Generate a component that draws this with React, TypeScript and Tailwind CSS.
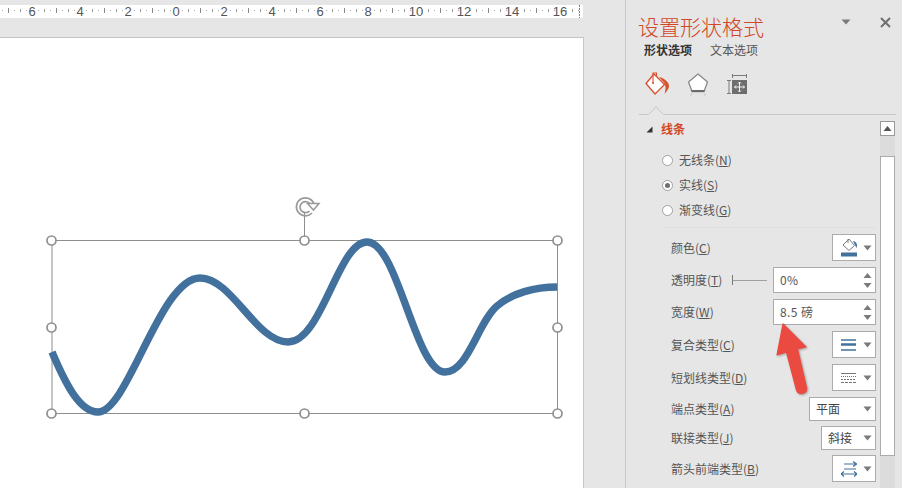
import React from "react";

const FONT = "font-['Noto_Sans_CJK_SC','Noto_Sans',sans-serif]";

function Caret() {
  return (
    <svg width="9" height="6" viewBox="0 0 9 6" className="shrink-0">
      <path d="M0.5 0.5H8.5L4.5 5.5Z" fill="#7a7a7a" />
    </svg>
  );
}

function Ruler() {
  const labels = ["6", "4", "2", "0", "2", "4", "6", "8", "10", "12", "14", "16"];
  const ticks: React.ReactNode[] = [];
  for (let x = 2; x < 579; x += 6) {
    const k = ((x - 32) % 48 + 48) % 48;
    if (k === 0) continue;
    if (k === 24) ticks.push(<rect key={x} x={x} y={8} width={1} height={5} fill="#8a8a8a" />);
    else if (k % 12 === 0) ticks.push(<rect key={x} x={x} y={9} width={1} height={3} fill="#9a9a9a" />);
    else ticks.push(<rect key={x} x={x} y={10} width={1} height={1} fill="#a8a8a8" />);
  }
  return (
    <div className="relative mt-[5px] h-[13px] w-[583px] bg-white overflow-hidden shrink-0">
      <svg width="583" height="13" viewBox="0 5 583 13" className="absolute left-0 top-0">
        {ticks}
        <path d="M579.5 5V18" stroke="#c8643c" strokeWidth="1" strokeDasharray="2 1" />
      </svg>
      <div className="relative flex pl-2">
        {labels.map((l, i) => (
          <div key={i} className="w-12 h-[13px] shrink-0 flex items-center justify-center text-[13px] leading-[13px] text-[#555555] font-['Liberation_Sans',sans-serif]">
            {l}
          </div>
        ))}
      </div>
    </div>
  );
}

function Handle({ x, y }: { x: number; y: number }) {
  return <circle cx={x} cy={y} r={4.5} fill="#ffffff" stroke="#8e8e8e" strokeWidth={1.7} />;
}

function Shape() {
  return (
    <svg width="584" height="450" viewBox="0 38 584 450" className="absolute left-0 top-0">
      <path d="M304.5 213V240" stroke="#8e8e8e" />
      <rect x="52" y="240.5" width="505.5" height="173" fill="none" stroke="#8e8e8e" strokeWidth="1" />
      <path
        d="M52 352 C66 385 80 412 98 412 C128 412 160 278 200 278 C232 278 256 342 288 342 C322 342 338 242 367 242 C398 242 415 372 445 372 C468 372 478 322 497 306 C512 293 535 287 557 287"
        fill="none"
        stroke="#41719c"
        strokeWidth="7.4"
      />
      <Handle x={51.5} y={240.5} />
      <Handle x={304.5} y={240.5} />
      <Handle x={557.5} y={240.5} />
      <Handle x={51.5} y={327.5} />
      <Handle x={557.5} y={327.5} />
      <Handle x={51.5} y={413.5} />
      <Handle x={304.5} y={413.5} />
      <Handle x={557.5} y={413.5} />
      <path d="M312 213 A9 9 0 1 1 314 204" fill="none" stroke="#9a9a9a" strokeWidth="1.7" />
      <path d="M309.5 211 A5.5 5.5 0 1 1 310 204" fill="none" stroke="#9a9a9a" strokeWidth="1.7" />
      <path d="M307.5 203.5H319L313.5 210Z" fill="#ffffff" stroke="#9a9a9a" strokeWidth="1.5" />
    </svg>
  );
}

function Label({ text, k }: { text: string; k: string }) {
  return (
    <span className="text-xs text-[#555555] whitespace-nowrap">
      {text}(<span className="underline">{k}</span>)
    </span>
  );
}

function Radio({ text, k, checked, className }: { text: string; k: string; checked?: boolean; className: string }) {
  return (
    <div className={`flex items-center h-4 ml-[36px] gap-[6px] ${className}`}>
      <div className="w-[11px] h-[11px] rounded-full border border-[#a0a0a0] bg-white flex items-center justify-center">
        {checked && <div className="w-[5px] h-[5px] rounded-full bg-[#6f6f6f]" />}
      </div>
      <Label text={text} k={k} />
    </div>
  );
}

function Row({ text, k, className, children }: { text: string; k: string; className: string; children: React.ReactNode }) {
  return (
    <div className={`flex items-center justify-between ml-[45px] w-[205px] ${className}`}>
      <Label text={text} k={k} />
      {children}
    </div>
  );
}

function IconBox({ children }: { children: React.ReactNode }) {
  return (
    <div className="w-11 h-[27px] border border-[#ababab] bg-white flex items-center pl-2 pr-[3px] justify-between">
      {children}
      <Caret />
    </div>
  );
}

function Spin({ value }: { value: string }) {
  return (
    <div className="w-[103px] h-[26px] border border-[#ababab] bg-white flex items-center justify-between pl-1.5 pr-[3px]">
      <span className="text-xs text-[#555555] tracking-[0.4px] whitespace-pre">{value}</span>
      <div className="flex flex-col gap-[5px] mr-0">
        <svg width="9" height="5" viewBox="0 0 9 5"><path d="M0.5 5L4.5 0L8.5 5Z" fill="#7a7a7a" /></svg>
        <svg width="9" height="5" viewBox="0 0 9 5"><path d="M0.5 0H8.5L4.5 5Z" fill="#7a7a7a" /></svg>
      </div>
    </div>
  );
}

function Drop({ value, w }: { value: string; w: string }) {
  return (
    <div className={`${w} h-6 border border-[#ababab] bg-white flex items-center justify-between pl-1.5 pr-[3px]`}>
      <span className="text-xs text-[#444444]">{value}</span>
      <Caret />
    </div>
  );
}

function PanelIcons() {
  return (
    <div className="flex items-start h-[24px] ml-[6px] mt-[13px]">
      <svg width="25" height="24" viewBox="645 73 25 24" className="shrink-0">
        <path d="M654 75L664.5 85.5L655 95L646 84.5Z" fill="#ffffff" stroke="#d9502e" strokeWidth="1.3" strokeLinejoin="round" />
        <path d="M653 84V74H656.5V78" fill="none" stroke="#d9502e" strokeWidth="1.1" />
        <circle cx="653" cy="84" r="1" fill="#d9502e" />
        <path d="M659 78C664 79 669 83 669 87C669 90 666 93 664.5 95C665.5 91 666.5 88 664 83.5Z" fill="#d9502e" />
      </svg>
      <svg width="22" height="25" viewBox="686 72 22 25" className="shrink-0 ml-[17px]">
        <path d="M697 74L706.5 82L703 91.5H691L687.5 82Z" fill="#ffffff" stroke="#8a8a8a" strokeWidth="1.3" strokeLinejoin="round" />
        <path d="M690.5 91H703.5" stroke="#6b6b6b" strokeWidth="2" />
        <path d="M691 93L689.5 96M703 93L704.5 96" stroke="#cfcfcf" strokeWidth="1.2" />
      </svg>
      <svg width="22" height="24" viewBox="725 73 22 24" className="shrink-0 ml-[17px]">
        <path d="M731.5 75V79M745.5 75V79M731.5 76.5H745.5" fill="none" stroke="#7a7a7a" strokeWidth="1" />
        <path d="M726 81.5H730M726 94.5H730M728 81.5V94.5" fill="none" stroke="#7a7a7a" strokeWidth="1" />
        <rect x="731" y="81" width="15" height="14" fill="#6d6d6d" />
        <path d="M738.5 83V93M733.5 88H743.5M737 84.5L738.5 83L740 84.5M737 91.5L738.5 93L740 91.5M735 86.5L733.5 88L735 89.5M742 86.5L743.5 88L742 89.5" fill="none" stroke="#ffffff" strokeWidth="0.9" />
      </svg>
    </div>
  );
}

function Panel() {
  return (
    <div className={`relative w-[276px] h-[488px] flex flex-col shrink-0 ${FONT}`}>
      <div className="h-[115px] shrink-0 ml-[13px] mr-[6px] border-b border-[#c6c6c6] relative">
        <div className="flex items-center justify-between pt-[10px] h-[41px]">
          <span className="text-[21px] leading-7 font-light text-[#d24726] whitespace-nowrap -ml-px">设置形状格式</span>
          <div className="flex items-center gap-[29px] pr-[5px] pb-[7px]">
            <svg width="10" height="6" viewBox="0 0 10 6"><path d="M0.5 0.5H9.5L5 5.5Z" fill="#7a7a7a" /></svg>
            <svg width="11" height="11" viewBox="0 0 11 11"><path d="M1 1L10 10M10 1L1 10" stroke="#6f6f6f" strokeWidth="2" /></svg>
          </div>
        </div>
        <div className="flex gap-[18px] ml-[5px] text-xs h-[18px] items-center">
          <span className="font-bold text-[#333333]">形状选项</span>
          <span className="text-[#555555]">文本选项</span>
        </div>
        <PanelIcons />
        <svg width="18" height="9" viewBox="0 0 18 9" className="absolute left-2 bottom-[-1px]">
          <path d="M0 8.5H1.5L9 0.8L16.5 8.5H18V9H0Z" fill="#e6e6e6" />
          <path d="M0 8.5H1.5L9 0.8L16.5 8.5H18" fill="none" stroke="#c6c6c6" />
        </svg>
      </div>
      <div className="flex flex-1 min-h-0">
        <div className="flex-1 min-w-0 flex flex-col">
          <div className="flex items-center h-4 mt-[6px] ml-[20px] gap-[8px]">
            <svg width="7" height="7" viewBox="0 0 7 7"><path d="M6.5 0.5V6.5H0.5Z" fill="#333333" /></svg>
            <span className="text-xs font-bold text-[#d24726]">线条</span>
          </div>
          <Radio text="无线条" k="N" className="mt-[15px]" />
          <Radio text="实线" k="S" checked className="mt-[9px]" />
          <Radio text="渐变线" k="G" className="mt-[9px]" />
          <div className="mt-[9px] ml-[37px] mr-[4px] border-t border-[#e0e0e0]" />
          <Row text="颜色" k="C" className="mt-[6px]">
            <IconBox>
              <svg width="17" height="19" viewBox="0 0 17 19">
                <path d="M8 1L13.5 7.5L8 12.5L2 7Z" fill="#ffffff" stroke="#7a7a7a" />
                <path d="M7 1V5" stroke="#7a7a7a" />
                <path d="M12 3C15 3.5 17 6 15.5 10L14 7Z" fill="#41719c" />
                <rect x="0" y="14.5" width="16" height="4" fill="#41719c" />
              </svg>
            </IconBox>
          </Row>
          <div className="flex items-center justify-between ml-[45px] w-[205px] mt-[6px]">
            <Label text="透明度" k="T" />
            <div className="flex items-center gap-1.5">
              <div className="flex items-center w-[35px]">
                <div className="w-px h-[10px] bg-[#7a7a7a]" />
                <div className="w-[34px] h-px bg-[#a0a0a0]" />
              </div>
              <Spin value="0%" />
            </div>
          </div>
          <Row text="宽度" k="W" className="mt-[6px]"><Spin value="8.5 磅" /></Row>
          <Row text="复合类型" k="C" className="mt-[6px]">
            <IconBox>
              <svg width="16" height="12" viewBox="0 0 16 12">
                <path d="M0 1H15" stroke="#41719c" strokeWidth="1.5" />
                <path d="M0 5.5H15" stroke="#41719c" strokeWidth="2.5" />
                <path d="M0 11H15" stroke="#41719c" strokeWidth="1.5" />
              </svg>
            </IconBox>
          </Row>
          <Row text="短划线类型" k="D" className="mt-[6px]">
            <IconBox>
              <svg width="16" height="10" viewBox="0 0 16 10">
                <path d="M0 0.5H15" stroke="#777777" />
                <path d="M0 3.5H15" stroke="#777777" strokeDasharray="1 1" />
                <path d="M0 6.5H15" stroke="#777777" strokeDasharray="2 1" />
                <path d="M0 9.5H15" stroke="#777777" strokeDasharray="3 1" />
              </svg>
            </IconBox>
          </Row>
          <Row text="端点类型" k="A" className="mt-[6px]"><Drop value="平面" w="w-[67px]" /></Row>
          <Row text="联接类型" k="J" className="mt-[5px]"><Drop value="斜接" w="w-[55px]" /></Row>
          <Row text="箭头前端类型" k="B" className="mt-[5px]">
            <IconBox>
              <svg width="16" height="16" viewBox="0 0 16 16">
                <path d="M3 3H15M12 0.5L15.5 3L12 5.5" fill="none" stroke="#41719c" strokeWidth="1.2" />
                <path d="M0 3V8H15" fill="none" stroke="#41719c" strokeWidth="0" />
                <path d="M3 8H15M0 13H16M3 10.5L0 13L3 15.5M13 10.5L16 13L13 15.5" fill="none" stroke="#41719c" strokeWidth="1.2" />
              </svg>
            </IconBox>
          </Row>
        </div>
        <div className="w-[15px] shrink-0 mr-[7px] mt-[6px] flex flex-col bg-[#dcdcdc]">
          <div className="h-[15px] border border-[#9a9a9a] bg-white flex items-center justify-center shrink-0">
            <svg width="9" height="5" viewBox="0 0 9 5"><path d="M0.5 5L4.5 0L8.5 5Z" fill="#555555" /></svg>
          </div>
          <div className="h-[300px] mt-5 border border-[#ababab] bg-white shrink-0" />
        </div>
      </div>
      <svg width="60" height="80" viewBox="765 320 60 80" className="absolute left-[139px] top-[320px] drop-shadow-[1px_1px_1px_rgba(0,0,0,0.3)]">
        <path d="M783 324L777 355L786.5 352L796.5 390Q798 394.5 802.5 393.5Q807.5 392 806.5 387.5L797.5 349L806 347Z" fill="#eb4a40" stroke="#eb4a40" strokeWidth="1.2" strokeLinejoin="round" />
      </svg>
    </div>
  );
}

export default function App() {
  return (
    <div className="flex w-[902px] h-[488px] overflow-hidden bg-[#e6e6e6]">
      <div className="w-[626px] h-full shrink-0 border-r border-[#c9c9c9] flex flex-col">
        <Ruler />
        <div className="relative mt-[19px] w-[584px] flex-1 bg-white border-t border-r border-[#c6c6c6]">
          <Shape />
        </div>
      </div>
      <Panel />
    </div>
  );
}
